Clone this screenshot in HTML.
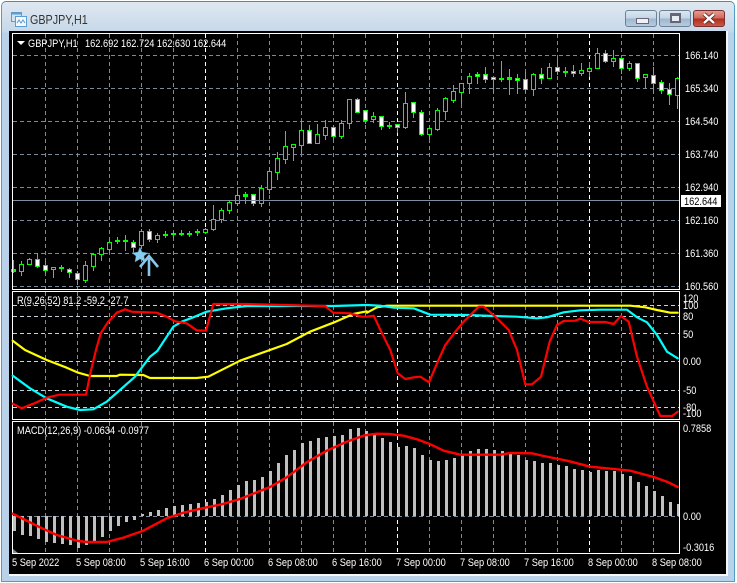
<!DOCTYPE html>
<html><head><meta charset="utf-8"><style>
html,body{margin:0;padding:0;background:#fff}
body{width:737px;height:583px;overflow:hidden;position:relative;font-family:"Liberation Sans",sans-serif}
#f{position:absolute;left:1px;top:1px;width:734px;height:581px;box-sizing:border-box;border:1px solid #4f9fc4;border-top-color:#6f7f8c;border-radius:5px 5px 0 0;background:linear-gradient(#dfe8f0 0,#c6d8e9 30px,#b9d2ea 31px)}
#t{position:absolute;left:30px;top:12px;font-size:12.5px;color:#333;line-height:16px;transform:scaleX(.86);transform-origin:left center}
#c{position:absolute;left:9px;top:31px;width:717px;height:543px;background:#000}
#w{position:absolute;left:9px;top:574px;width:718px;height:2px;background:#f4f7fa}
#r{position:absolute;left:726px;top:31px;width:2px;height:545px;background:#f4f7fa}
.b{position:absolute;top:10px;height:17px;box-sizing:border-box;border:1px solid #6d8196;border-radius:3px;background:linear-gradient(#dbe6f1 0,#c3d5e6 48%,#9db6cf 52%,#b7cbde 100%)}
svg{position:absolute;left:0;top:0}
text{font-family:"Liberation Sans",sans-serif;font-size:11px;fill:#fff}
</style></head><body>
<div id="f"></div>
<div id="c"></div><div id="w"></div><div id="r"></div>
<div id="t">GBPJPY,H1</div>
<div class="b" style="left:625px;width:32px"><div style="position:absolute;left:10px;top:7px;width:11px;height:4px;background:#eef2f6;border:1px solid #667"></div></div>
<div class="b" style="left:659px;width:32px"><div style="position:absolute;left:10px;top:2px;width:11px;height:10px;box-sizing:border-box;border:2px solid #667;border-top-width:3px;background:#e6edf3"></div></div>
<div class="b" style="left:693px;width:32px;border-color:#7a3030;background:linear-gradient(#e59a8e 0,#cf6a5c 48%,#b02c1e 52%,#c9584a 100%)">
<svg width="30" height="15"><path d="M10 3L20 12M20 3L10 12" stroke="#5a2420" stroke-width="4"/><path d="M10 3L20 12M20 3L10 12" stroke="#fff" stroke-width="2.4"/></svg></div>
<svg width="737" height="583" id="s" xmlns="http://www.w3.org/2000/svg">
<g id="icon" transform="translate(11,11)">
<rect x="0.5" y="1.5" width="10" height="9" fill="#cfe3f5" stroke="#5d9bd0"/>
<rect x="0" y="1" width="11" height="2.5" fill="#5d9bd0"/>
<rect x="4.5" y="5.5" width="11" height="10" fill="#f4f8fc" stroke="#5d9bd0"/>
<path d="M6 12l2-3 2 3 2-3 2 3" fill="none" stroke="#5d9bd0"/>
</g>
<g id="grid" shape-rendering="crispEdges"></g>
<g id="macdbars" shape-rendering="crispEdges"></g>
<g id="cand" shape-rendering="crispEdges"></g>
<line x1="13" x2="679" y1="200.5" y2="200.5" stroke="#7f8ea0"/>
<g stroke="#fff" fill="none" shape-rendering="crispEdges">
<rect x="12.5" y="33.5" width="667" height="256"/>
<rect x="12.5" y="291.5" width="667" height="128"/>
<rect x="12.5" y="421.5" width="667" height="132"/>
</g>
<path d="M17 41h8l-4 4z" fill="#fff"/>
<text x="28" y="47">GBPJPY,H1</text><text x="85" y="47">162.692 162.724 162.630 162.644</text>
<text x="17" y="304">R(9,26,52) 81.2 -59.2 -27.7</text>
<text x="17" y="434">MACD(12,26,9) -0.0634 -0.0977</text>
<path d="M13 549l5 4h-5z" fill="#8090a0"/>
<g id="lines" fill="none" stroke-linejoin="round" stroke-linecap="round"></g>
<g id="arrow">
<path d="M140 247l2 5 6 1-4 3 1 6-5-3-5 3 1-6-4-3 6-1z" fill="#87cdf0" stroke="#4d86aa" stroke-width=".5"/>
<path d="M150 269l8-1" fill="none"/>
<path d="M140 267l9-11 9 11M149 257v19" fill="none" stroke="#87c6e8" stroke-width="2.6"/>
</g>
<g id="ax">
<text x="685" y="59">166.140</text><text x="685" y="92">165.340</text><text x="685" y="125">164.540</text><text x="685" y="158">163.740</text><text x="685" y="191">162.940</text>
<rect x="681" y="195" width="40" height="12" fill="#fff"/><text x="684" y="205" style="fill:#000">162.644</text>
<text x="685" y="224">162.160</text><text x="685" y="257">161.360</text><text x="685" y="290">160.560</text>
<text x="683" y="302">120</text><text x="683" y="309">100</text><text x="683" y="320">80</text><text x="683" y="338">50</text><text x="683" y="365">0.00</text><text x="683" y="394">-50</text><text x="683" y="411">-80</text><text x="683" y="417">-100</text>
<text x="683" y="432">0.7858</text><text x="683" y="520">0.00</text><text x="683" y="551">-0.3016</text>
<text x="12" y="566">5 Sep 2022</text><text x="76" y="566">5 Sep 08:00</text><text x="140" y="566">5 Sep 16:00</text><text x="204" y="566">6 Sep 00:00</text><text x="268" y="566">6 Sep 08:00</text><text x="332" y="566">6 Sep 16:00</text><text x="396" y="566">7 Sep 00:00</text><text x="460" y="566">7 Sep 08:00</text><text x="524" y="566">7 Sep 16:00</text><text x="588" y="566">8 Sep 00:00</text><text x="652" y="566">8 Sep 08:00</text>
</g>
</svg>
<script>
var NS="http://www.w3.org/2000/svg";
function el(p,n,a){var e=document.createElementNS(NS,n);for(var k in a)e.setAttribute(k,a[k]);document.getElementById(p).appendChild(e);return e}
var panes=[[34,289,[55,88,121,154,187,220,253,286]],[292,419,[305,316,333,361,390,407]],[422,553,[516]]];
panes.forEach(function(p){
 for(var x=45;x<=653;x+=32){var day=(x==205||x==397||x==589);
  el("grid","line",{x1:x+.5,x2:x+.5,y1:p[0],y2:p[1],stroke:day?"#fff":"#7b8a9b","stroke-dasharray":"4 3"})}
 p[2].forEach(function(y){el("grid","line",{x1:13,x2:679,y1:y+.5,y2:y+.5,stroke:p[0]==292?"#c8d0d8":"#7b8a9b","stroke-dasharray":"4 3"})});
});
var neg=[350,362,365,372,381,384,387,390,399,392,378,366,348,333,321,315];
var pos=[297,291,285,279,273,270,267,264,261,252,240,225,210,198,195,186,168,144,120,105,84,78,69,66,63,60,42,39,48,54,69,81,96,93,99,120,135,138,135,129,120,108,102,102,105,108,117,120,135,138,144,144,150,153,162,165,171,165,168,168,177,183,201,213,228,243,261,267];
neg.forEach(function(v,i){el("macdbars","rect",{x:13+8*i,y:516,width:3,height:Math.round((v-304)/3),fill:"#c0c0c0"})});
pos.forEach(function(v,i){var h=Math.round((304-v)/3);el("macdbars","rect",{x:13+8*(i+16),y:516-h,width:3,height:h,fill:"#c0c0c0"})});
var C=[[260,272,269,271,'c'],[261,275,264,271,'h'],[258,264,259,264,'h'],[253,267,259,266,'w'],[261,272,265,270,'w'],[267,277,267,269,'h'],[265,271,267,268,'c'],[268,277,269,272,'w'],[271,284,273,279,'w'],[261,282,265,280,'h'],[253,270,254,266,'h'],[247,260,248,254,'h'],[238,252,242,249,'h'],[237,243,240,241,'c'],[235,250,240,241,'c'],[240,252,242,247,'w'],[229,248,231,245,'h'],[229,241,231,239,'w'],[233,242,235,239,'h'],[231,237,234,235,'c'],[231,237,233,234,'c'],[230,235,233,234,'c'],[231,236,233,234,'c'],[229,235,231,232,'c'],[228,233,229,232,'h'],[205,230,219,229,'h'],[208,222,210,219,'h'],[200,213,202,210,'h'],[191,205,195,203,'h'],
[192,203,194,196,'c'],[194,205,194,203,'w'],[185,206,188,203,'h'],[167,193,171,189,'h'],[152,179,158,172,'h'],[131,163,146,159,'h'],[144,160,144,147,'h'],[121,152,130,145,'h'],[125,143,130,143,'w'],[124,143,134,143,'h'],[120,139,127,135,'h'],[125,139,127,136,'w'],[120,138,123,136,'h'],[99,128,99,123,'h'],[98,112,99,112,'w'],[110,123,110,120,'w'],[112,122,116,119,'h'],[116,129,116,126,'w'],[122,128,125,126,'c'],[124,132,124,127,'w'],[92,128,103,127,'h'],[102,117,102,112,'w'],[110,135,112,134,'w'],[128,138,128,134,'h'],[108,130,110,129,'h'],[97,119,98,111,'h'],[85,102,91,100,'h'],[83,103,83,92,'h'],[73,93,76,83,'h'],[72,83,74,76,'w'],
[67,82,74,79,'w'],[77,92,77,79,'w'],[61,81,78,79,'c'],[69,94,77,79,'c'],[74,93,78,80,'w'],[72,92,79,89,'w'],[73,95,74,89,'h'],[68,83,74,78,'w'],[63,78,67,78,'h'],[59,74,67,71,'w'],[67,76,71,72,'c'],[65,76,71,73,'w'],[63,75,70,73,'h'],[62,76,68,71,'h'],[48,68,53,68,'h'],[50,62,53,61,'w'],[50,66,58,61,'h'],[58,73,58,68,'w'],[61,70,63,68,'h'],[63,81,63,78,'w'],[74,87,74,77,'h'],[67,92,75,83,'w'],[80,93,82,90,'w'],[83,104,89,94,'w'],[77,108,78,95,'h']];
C.forEach(function(c,i){var x=13+8*i;
 el("cand","line",{x1:x+.5,x2:x+.5,y1:c[0],y2:c[1]+1,stroke:"#00ff00"});
 if(c[4]=='c'){el("cand","rect",{x:x-2,y:c[2],width:5,height:Math.max(1,c[3]-c[2]+1),fill:"#00ff00"})}
 else{el("cand","rect",{x:x-1.5,y:c[2]+.5,width:4,height:c[3]-c[2],fill:c[4]=='w'?"#fff":"#000",stroke:"#00ff00"})}
});
function pl(a,ox,oy){return a.map(function(p){return ((p[0]/3+ox).toFixed(1))+","+((p[1]/3+oy).toFixed(1))}).join(" ")}
function draw(a1,a2,oy,col,w){var s=pl(a1,0,oy)+" "+pl(a2,367,oy);el("lines","polyline",{points:s,stroke:col,"stroke-width":w})}
draw([[38,152],[75,180],[140,210],[200,233],[235,248],[270,258],[350,258],[360,254],[430,255],[450,264],[590,264],[625,260],[720,212],[860,162],[930,125],[1000,98],[1060,72],[1100,64]],[[0,68],[30,52],[60,47],[790,47],[835,52],[870,60],[910,68],[932,68]],290,"#ffff00",2.2);
draw([[38,257],[90,295],[140,325],[200,350],[240,360],[280,358],[320,335],[360,300],[405,260],[450,200],[472,183],[520,110],[545,95],[580,82],[620,65],[680,55],[740,48],[850,48],[1000,48],[1100,45]],[[0,45],[40,47],[80,53],[140,55],[190,74],[300,75],[380,78],[450,80],[510,85],[540,82],[590,67],[640,61],[700,59],[780,59],[810,82],[840,97],[870,135],[900,185],[932,205]],290,"#00ffff",2.2);
draw([[38,341],[65,355],[100,341],[140,323],[178,314],[258,314],[272,245],[288,180],[302,130],[325,95],[350,68],[375,58],[395,65],[470,68],[500,80],[525,94],[560,100],[590,121],[618,122],[640,42],[735,42],[975,48],[1000,68],[1050,70],[1085,80],[1100,80]],[[0,80],[20,77],[45,130],[70,180],[92,250],[115,267],[140,262],[160,260],[186,277],[210,220],[235,165],[265,125],[290,95],[320,65],[335,50],[350,50],[385,80],[425,120],[450,180],[475,283],[495,283],[522,260],[548,155],[570,105],[590,93],[625,92],[640,86],[665,96],[715,96],[740,102],[762,78],[785,95],[810,200],[840,290],[880,378],[915,378],[932,365]],290,"#ff0000",2.2);
draw([[38,296],[70,312],[120,337],[170,360],[235,378],[260,381],[320,381],[370,368],[430,347],[500,310],[550,293],[620,277],[665,268],[720,252],[810,216],[860,187],[920,142],[980,107],[1040,80],[1090,62]],[[0,60],[30,56],[65,57],[110,62],[150,73],[190,88],[230,107],[280,119],[400,119],[430,114],[495,115],[530,123],[600,137],[670,155],[720,160],[790,167],[860,186],[900,200],[932,216]],415,"#ff0000",2.4);
[].forEach.call(document.querySelectorAll("#s text"),function(t){
 var n=t.getComputedTextLength();t.setAttribute("textLength",(n*.84).toFixed(1));t.setAttribute("lengthAdjust","spacingAndGlyphs");
});
</script>
</body></html>
